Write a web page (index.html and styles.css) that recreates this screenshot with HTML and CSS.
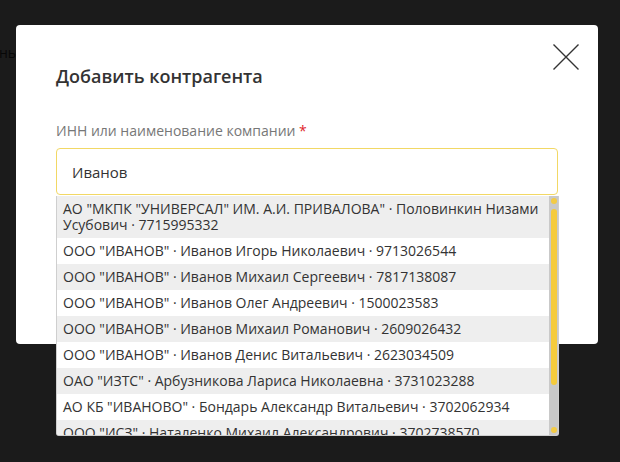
FILE: index.html
```html
<!DOCTYPE html>
<html lang="ru">
<head>
    <meta charset="UTF-8">
    <meta name="viewport" content="width=device-width, initial-scale=1.0">
    <title>Добавить контрагента</title>
    <link rel="stylesheet" href="styles.css">
</head>
<body>
    <div class="page-behind">нь</div>
    <div class="modal">
        <button class="modal-close" aria-label="Закрыть">
            <svg width="26" height="26" viewBox="0 0 26 26">
                <path d="M0.5 0.5 L25.5 25.5 M25.5 0.5 L0.5 25.5" stroke="#333" stroke-width="1.4" fill="none"/>
            </svg>
        </button>
        <h2 class="modal-title">Добавить контрагента</h2>
        <label class="field-label" for="company-input">ИНН или наименование компании <span class="required">*</span></label>
        <div class="field">
            <input type="text" id="company-input" class="field-input" value="Иванов">
            <div class="suggest">
                <ul class="suggest-list">
                    <li class="suggest-item">АО "МКПК "УНИВЕРСАЛ" ИМ. А.И. ПРИВАЛОВА" · Половинкин Низами Усубович · 7715995332</li>
                    <li class="suggest-item">ООО "ИВАНОВ" · Иванов Игорь Николаевич · 9713026544</li>
                    <li class="suggest-item">ООО "ИВАНОВ" · Иванов Михаил Сергеевич · 7817138087</li>
                    <li class="suggest-item">ООО "ИВАНОВ" · Иванов Олег Андреевич · 1500023583</li>
                    <li class="suggest-item">ООО "ИВАНОВ" · Иванов Михаил Романович · 2609026432</li>
                    <li class="suggest-item">ООО "ИВАНОВ" · Иванов Денис Витальевич · 2623034509</li>
                    <li class="suggest-item">ОАО "ИЗТС" · Арбузникова Лариса Николаевна · 3731023288</li>
                    <li class="suggest-item">АО КБ "ИВАНОВО" · Бондарь Александр Витальевич · 3702062934</li>
                    <li class="suggest-item">ООО "ИСЗ" · Наталенко Михаил Александрович · 3702738570</li>
                </ul>
                <div class="scrollbar">
                    <span class="scroll-arrow"></span>
                    <span class="scroll-thumb"></span>
                    <span class="scroll-rest"></span>
                    <span class="scroll-arrow"></span>
                </div>
            </div>
        </div>
    </div>
</body>
</html>
```

FILE: styles.css
```css
body {
    margin: 0;
    height: 462px;
    overflow: hidden;
    background: #1b1b1b;
    font-family: "Open Sans", Arial, sans-serif;
    color: #333;
}
.page-behind {
    position: absolute;
    top: 43px;
    left: -1px;
    font-size: 14px;
    color: #070707;
}
.modal {
    position: relative;
    width: 502px;
    height: 280px;
    margin: 25px 0 0 16px;
    padding: 39px 40px 0;
    background: #ffffff;
    border-radius: 4px;
}
.modal-close {
    position: absolute;
    top: 19px;
    right: 19px;
    width: 26px;
    height: 26px;
    padding: 0;
    border: none;
    background: none;
    cursor: pointer;
}
.modal-close svg {
    display: block;
}
.modal-title {
    margin: 0 0 33px;
    font-size: 18px;
    line-height: 24px;
    font-weight: 600;
    color: #333;
}
.field-label {
    display: block;
    margin-bottom: 7px;
    font-size: 14px;
    line-height: 20px;
    color: #777;
}
.required {
    color: #e0262b;
}
.field {
    position: relative;
}
.field-input {
    display: block;
    box-sizing: border-box;
    width: 100%;
    height: 47px;
    padding: 0 15px;
    border: 1px solid #f2d865;
    border-radius: 4px;
    font-family: inherit;
    font-size: 15px;
    color: #333;
    outline: none;
}
.suggest {
    position: absolute;
    top: 48px;
    left: 0;
    right: -1px;
    height: 240px;
    display: flex;
    background: #ffffff;
    border: 1px solid #cfcfcf;
    border-top: none;
    border-radius: 0 0 3px 3px;
    overflow: hidden;
    box-sizing: border-box;
}
.suggest-list {
    flex: 1;
    list-style: none;
    margin: 0;
    padding: 0;
    overflow: hidden;
}
.suggest-item {
    padding: 5px 7px 5px 6px;
    font-size: 14px;
    line-height: 16px;
    color: #333;
    cursor: pointer;
}
.suggest-item:nth-child(odd) {
    background: #eeeeee;
}
.scrollbar {
    width: 9px;
    display: flex;
    flex-direction: column;
    align-items: center;
    padding: 2px 0;
    background: #c9c9c9;
}
.scroll-arrow {
    width: 6px;
    height: 6px;
    border-radius: 3px;
    background: #f3cb45;
}
.scroll-thumb {
    width: 6px;
    height: 176px;
    margin-top: 5px;
    border-radius: 3px;
    background: #f5cb3c;
}
.scroll-rest {
    flex: 1;
}
```
